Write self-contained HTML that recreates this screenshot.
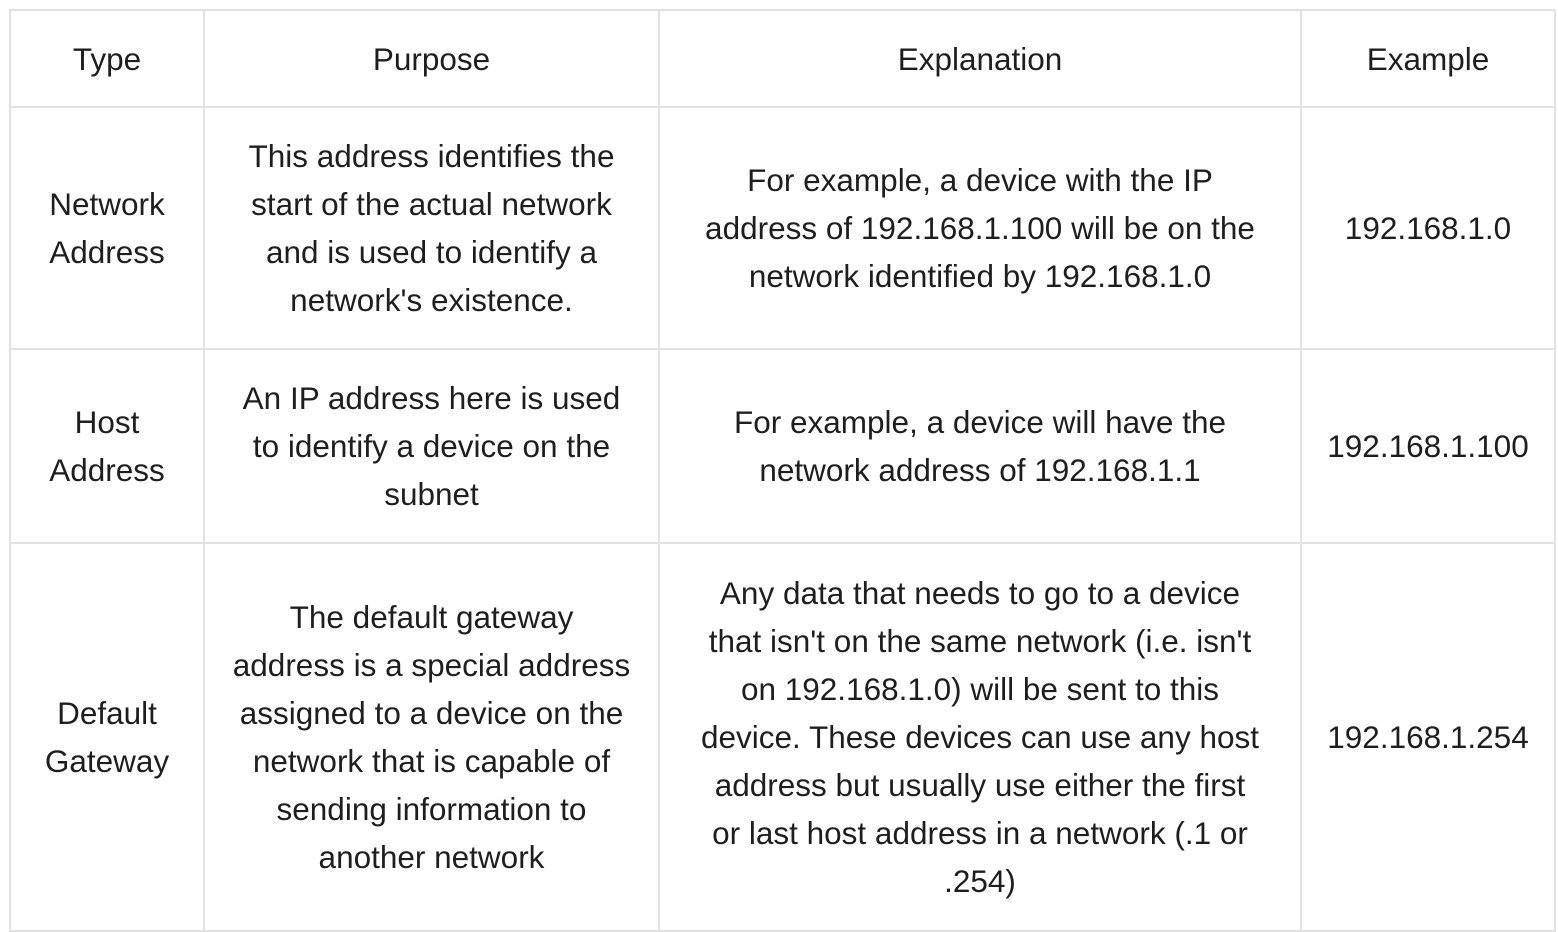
<!DOCTYPE html>
<html><head><meta charset="utf-8"><style>
html,body{margin:0;padding:0;background:#fff;width:1558px;height:928px;overflow:hidden}
.c{position:absolute;display:flex;align-items:center;justify-content:center;text-align:center;
font-family:"Liberation Sans",sans-serif;font-size:31.5px;line-height:48px;color:#1e1e1e;white-space:nowrap;
box-sizing:border-box;border-right:2px solid #e2e2e2;border-bottom:2px solid #e2e2e2}
.l{border-left:2px solid #e2e2e2}
.t{border-top:2px solid #e2e2e2}
</style></head><body>
<div class="c l t" style="left:9px;top:9px;width:196px;height:99px">Type</div>
<div class="c t" style="left:205px;top:9px;width:455px;height:99px">Purpose</div>
<div class="c t" style="left:660px;top:9px;width:642px;height:99px">Explanation</div>
<div class="c t" style="left:1302px;top:9px;width:254px;height:99px">Example</div>

<div class="c l" style="left:9px;top:108px;width:196px;height:242px">Network<br>Address</div>
<div class="c" style="left:205px;top:108px;width:455px;height:242px">This address identifies the<br>start of the actual network<br>and is used to identify a<br>network's existence.</div>
<div class="c" style="left:660px;top:108px;width:642px;height:242px">For example, a device with the IP<br>address of 192.168.1.100 will be on the<br>network identified by 192.168.1.0</div>
<div class="c" style="left:1302px;top:108px;width:254px;height:242px">192.168.1.0</div>

<div class="c l" style="left:9px;top:350px;width:196px;height:194px">Host<br>Address</div>
<div class="c" style="left:205px;top:350px;width:455px;height:194px">An IP address here is used<br>to identify a device on the<br>subnet</div>
<div class="c" style="left:660px;top:350px;width:642px;height:194px">For example, a device will have the<br>network address of 192.168.1.1</div>
<div class="c" style="left:1302px;top:350px;width:254px;height:194px">192.168.1.100</div>

<div class="c l" style="left:9px;top:544px;width:196px;height:388px">Default<br>Gateway</div>
<div class="c" style="left:205px;top:544px;width:455px;height:388px">The default gateway<br>address is a special address<br>assigned to a device on the<br>network that is capable of<br>sending information to<br>another network</div>
<div class="c" style="left:660px;top:544px;width:642px;height:388px">Any data that needs to go to a device<br>that isn't on the same network (i.e. isn't<br>on 192.168.1.0) will be sent to this<br>device. These devices can use any host<br>address but usually use either the first<br>or last host address in a network (.1 or<br>.254)</div>
<div class="c" style="left:1302px;top:544px;width:254px;height:388px">192.168.1.254</div>
</body></html>
